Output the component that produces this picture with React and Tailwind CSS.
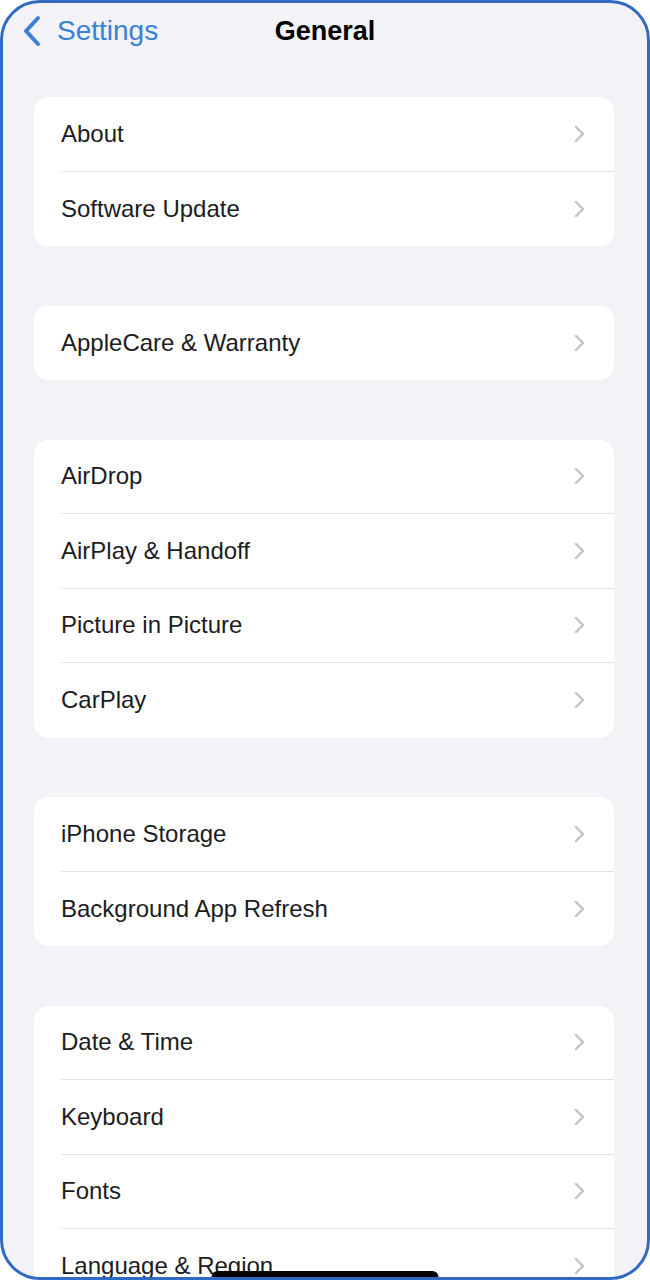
import React from 'react';

const groups = [
  ['About', 'Software Update'],
  ['AppleCare & Warranty'],
  ['AirDrop', 'AirPlay & Handoff', 'Picture in Picture', 'CarPlay'],
  ['iPhone Storage', 'Background App Refresh'],
  ['Date & Time', 'Keyboard', 'Fonts', 'Language & Region', 'Dictionary'],
];

const Chevron = () => (
  <svg width="11" height="18" viewBox="0 0 11 18" fill="none">
    <path d="M2 2 L9 9 L2 16" stroke="#c2c2c7" strokeWidth="2.4" strokeLinecap="round" strokeLinejoin="round" />
  </svg>
);

function Row({ label, last }) {
  return (
    <div className="flex h-[74.5px] pl-[27px]">
      <div className={`flex flex-1 items-center justify-between pr-[29px] ${last ? '' : 'border-b border-[#e2e2e6]'}`}>
        <span className="text-[24px] text-[#1c1c1e]">{label}</span>
        <Chevron />
      </div>
    </div>
  );
}

export default function App() {
  return (
    <div className="w-[650px] h-[1280px] bg-white" style={{ fontFamily: '"Liberation Sans", Arial, sans-serif' }}>
      <div className="relative h-full overflow-hidden rounded-[40px] border-[3px] border-[#2f6bc4] bg-[#f2f2f7]">
        {/* Nav bar */}
        <div className="grid h-[56px] grid-cols-[1fr_auto_1fr] items-center">
          <div className="flex items-center gap-[15px] pl-[19px]">
            <svg width="20" height="32" viewBox="0 0 20 32" fill="none">
              <path d="M16 3 L4 16 L16 29" stroke="#3a80d6" strokeWidth="4" strokeLinecap="round" strokeLinejoin="round" />
            </svg>
            <span className="text-[28px] text-[#3a80d6]">Settings</span>
          </div>
          <span className="text-[27px] font-bold text-black">General</span>
          <div />
        </div>

        {/* Groups */}
        <div className="flex flex-col gap-[59.5px] pl-[31px] pr-[33px] pt-[38px]">
          {groups.map((rows, i) => (
            <div key={i} className="rounded-[14px] bg-white">
              {rows.map((r, j) => (
                <Row key={r} label={r} last={j === rows.length - 1} />
              ))}
            </div>
          ))}
        </div>

        {/* Home indicator */}
        <div className="absolute bottom-0 left-1/2 h-[6px] w-[227px] -translate-x-1/2 rounded-t-full bg-black" />
      </div>
    </div>
  );
}
